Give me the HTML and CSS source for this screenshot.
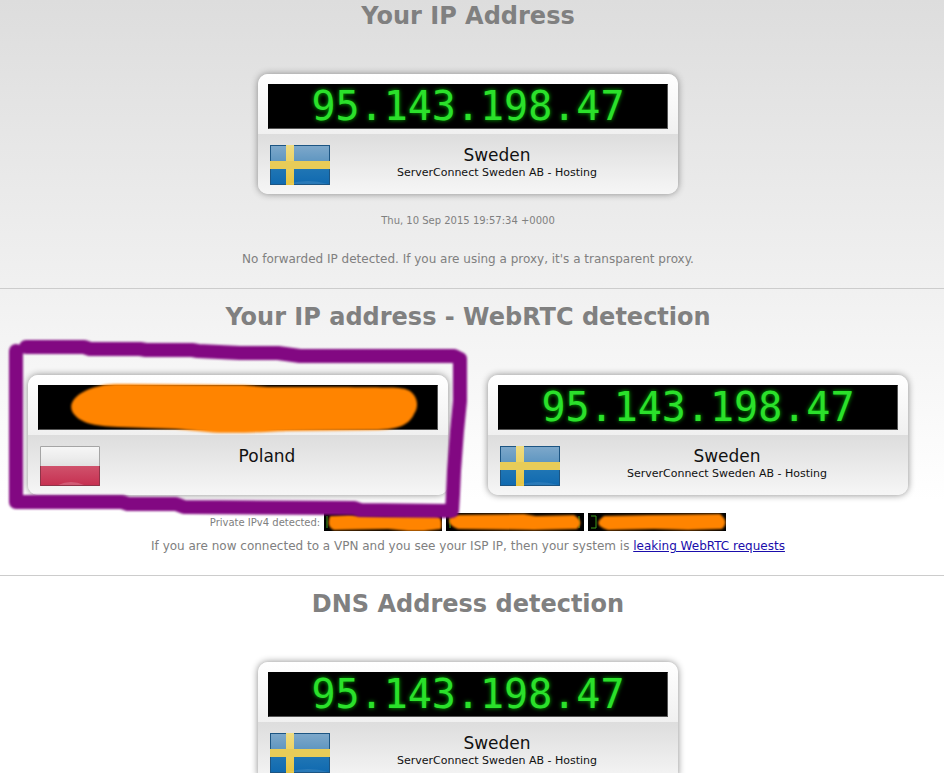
FILE: index.html
```html
<!DOCTYPE html>
<html lang="en">

<head>
    <meta charset="utf-8">
    <meta name="viewport" content="width=device-width, initial-scale=1">
    <title>Your IP Address</title>
    <link rel="stylesheet" href="styles.css">
</head>

<body>
    <!-- shared flag drawings -->
    <svg class="defs" width="0" height="0" aria-hidden="true">
        <defs>
            <linearGradient id="blue" x1="0" y1="0" x2="0" y2="1">
                <stop offset="0" stop-color="#7fa9cb"/>
                <stop offset="0.48" stop-color="#5a93bf"/>
                <stop offset="0.52" stop-color="#2378b5"/>
                <stop offset="1" stop-color="#0f69b0"/>
            </linearGradient>
            <linearGradient id="yellow" x1="0" y1="0" x2="0" y2="1">
                <stop offset="0" stop-color="#f0dc80"/>
                <stop offset="1" stop-color="#e6c440"/>
            </linearGradient>
            <linearGradient id="white" x1="0" y1="0" x2="0" y2="1">
                <stop offset="0" stop-color="#f7f7f7"/>
                <stop offset="0.6" stop-color="#ececec"/>
                <stop offset="1" stop-color="#e2e2e2"/>
            </linearGradient>
            <linearGradient id="red" x1="0" y1="0" x2="0" y2="1">
                <stop offset="0" stop-color="#d0526c"/>
                <stop offset="1" stop-color="#c62f50"/>
            </linearGradient>
            <symbol id="sweden" viewBox="0 0 60 40">
                <rect width="60" height="40" fill="url(#blue)"/>
                <rect x="0.5" y="0.5" width="59" height="39" fill="none" stroke="#1c5583"/>
                <rect x="16" width="8" height="40" fill="url(#yellow)"/>
                <rect y="16" width="60" height="8" fill="#e8cc58"/>
                <path d="M18 39Q38 33 58 39Z" fill="#fff" opacity="0.1"/>
            </symbol>
            <symbol id="poland" viewBox="0 0 60 40">
                <rect width="60" height="20" fill="url(#white)"/>
                <rect y="20" width="60" height="20" fill="url(#red)"/>
                <path d="M18 39Q31 33 44 39Z" fill="#fff" opacity="0.2"/>
                <path d="M0.5 20V0.5H59.5V20" fill="none" stroke="#a5a5a5"/>
                <path d="M0.5 20V39.5H59.5V20" fill="none" stroke="#8e3448"/>
            </symbol>
        </defs>
    </svg>

    <section class="block">
        <h1>Your IP Address</h1>
        <div class="cards">
            <div class="card">
                <div class="card-top">
                    <div class="lcd">95.143.198.47</div>
                </div>
                <div class="card-bottom">
                    <svg class="flag" role="img" aria-label="Sweden"><use href="#sweden"/></svg>
                    <div class="info">
                        <div class="country">Sweden</div>
                        <div class="isp">ServerConnect Sweden AB - Hosting</div>
                    </div>
                </div>
            </div>
        </div>
        <p class="date">Thu, 10 Sep 2015 19:57:34 +0000</p>
        <p class="note">No forwarded IP detected. If you are using a proxy, it's a transparent proxy.</p>
    </section>

    <section class="block">
        <h1>Your IP address - WebRTC detection</h1>
        <div class="cards">
            <div class="card">
                <div class="card-top">
                    <div class="lcd"></div>
                </div>
                <div class="card-bottom">
                    <svg class="flag" role="img" aria-label="Poland"><use href="#poland"/></svg>
                    <div class="info">
                        <div class="country">Poland</div>
                    </div>
                </div>
                <svg class="marker" viewBox="0 0 460 176" aria-hidden="true">
                    <path class="orange" d="M92 47C98 45 108 45 118 45L235 46L260 48L340 48C376 49 394 47 402 52C410 58 411 68 406 75C401 87 388 90 370 91L278 92C258 93 220 95 200 93L168 90L110 88C86 87 70 84 64 72C60 62 72 51 92 47Z"/>
                    <path class="purple" d="M8 12V163H114L120 165H168L176 168L346 169L352 171L444 172L445 155L446 132L449 92L452 62V20L446 17H292L270 14H232L190 12L184 11H138L132 10H82L76 8H18"/>
                </svg>
            </div>
            <div class="card">
                <div class="card-top">
                    <div class="lcd">95.143.198.47</div>
                </div>
                <div class="card-bottom">
                    <svg class="flag" role="img" aria-label="Sweden"><use href="#sweden"/></svg>
                    <div class="info">
                        <div class="country">Sweden</div>
                        <div class="isp">ServerConnect Sweden AB - Hosting</div>
                    </div>
                </div>
            </div>
        </div>
        <div class="private">
            <span>Private IPv4 detected:</span>
            <svg class="ip ip-short" viewBox="0 0 118 18" aria-hidden="true">
                <path class="lcd-edge" d="M3 3V15"/>
                <path class="orange" d="M6 3L24 2L60 3L112 2Q119 4 117 16L100 18L84 18L64 16L10 17Q2 14 6 3Z"/>
            </svg>
            <svg class="ip" viewBox="0 0 138 18" aria-hidden="true">
                <path class="lcd-edge" d="M4 3V15M133 3V15"/>
                <path class="orange" d="M6 2L78 1L90 3L128 2Q139 9 131 16L88 17L12 16Q-2 11 6 2Z"/>
            </svg>
            <svg class="ip" viewBox="0 0 138 18" aria-hidden="true">
                <path class="lcd-edge" d="M3 3H8V15H3"/>
                <path class="orange" d="M16 3L60 2L132 1Q142 9 134 16L100 17L66 16L20 17Q3 12 16 3Z"/>
            </svg>
        </div>
        <p class="note">If you are now connected to a VPN and you see your ISP IP, then your system is <a href="#">leaking WebRTC requests</a></p>
    </section>

    <section class="block">
        <h1>DNS Address detection</h1>
        <div class="cards">
            <div class="card">
                <div class="card-top">
                    <div class="lcd">95.143.198.47</div>
                </div>
                <div class="card-bottom">
                    <svg class="flag" role="img" aria-label="Sweden"><use href="#sweden"/></svg>
                    <div class="info">
                        <div class="country">Sweden</div>
                        <div class="isp">ServerConnect Sweden AB - Hosting</div>
                    </div>
                </div>
            </div>
        </div>
    </section>
</body>

</html>
```

FILE: styles.css
```css
body {
    font-family: Verdana, "DejaVu Sans", sans-serif;
    font-size: 12px;
    color: #808080;
    text-align: center;
    margin: 0;
    height: 100vh;
    overflow: hidden;
    background: #fff linear-gradient(#dddddd, #ffffff 500px) no-repeat;
}

.defs {
    display: block;
}

.block {
    padding: 12px 8px 22px 0;
    border-bottom: 1px solid #ccc;
}

.block:first-of-type {
    padding-top: 0;
}

h1 {
    font-size: 24px;
    line-height: 32px;
    margin: 0 0 42px;
}

.cards {
    display: flex;
    justify-content: center;
    gap: 40px;
}

.card {
    position: relative;
    width: 420px;
    height: 120px;
    border-radius: 10px;
    background: #f5f5f5;
    box-shadow: 0 0 7px #888;
    color: #111;
}

.card-top {
    height: 60px;
    padding: 10px 10px 0;
    box-sizing: border-box;
    border-radius: 10px 10px 0 0;
    background: linear-gradient(#ffffff, #f0f0f0);
}

.card-bottom {
    display: flex;
    height: 60px;
    padding: 11px 14px 0 12px;
    box-sizing: border-box;
    border-radius: 0 0 10px 10px;
    background: linear-gradient(#dddddd, #f6f6f6);
}

.lcd {
    height: 45px;
    box-sizing: border-box;
    border: 1px solid #555;
    border-top-color: #000;
    border-left-color: #000;
    background: #000;
    color: #2be02b;
    font-family: "DejaVu Sans Mono", monospace;
    font-size: 40px;
    line-height: 42px;
    text-shadow: 0 0 4px #00b000;
}

.flag {
    width: 60px;
    height: 40px;
}

.info {
    flex: 1;
}

.country {
    font-size: 17px;
    line-height: 20px;
}

.isp {
    font-size: 11px;
    line-height: 16px;
}

.date {
    font-size: 10px;
    line-height: 14px;
    margin: 20px 0 24px;
}

.note {
    line-height: 14px;
    margin: 0;
}

.note a {
    color: #1a0dab;
}

.private {
    display: flex;
    justify-content: center;
    align-items: center;
    gap: 4px;
    height: 18px;
    margin: 18px 0 8px;
    font-size: 10px;
}

.ip {
    width: 138px;
    height: 18px;
    background: #000;
}

.ip-short {
    width: 118px;
}

.lcd-edge {
    fill: none;
    stroke: #3c9c1c;
}

/* hand-drawn marks over the first WebRTC card */
.marker {
    position: absolute;
    top: -36px;
    left: -20px;
    width: 460px;
    height: 176px;
    overflow: visible;
}

.orange {
    fill: #ff8400;
    filter: blur(1px);
}

.purple {
    fill: none;
    stroke: #820882;
    stroke-width: 14px;
    stroke-linejoin: round;
    stroke-linecap: round;
    filter: blur(1px);
}
```
